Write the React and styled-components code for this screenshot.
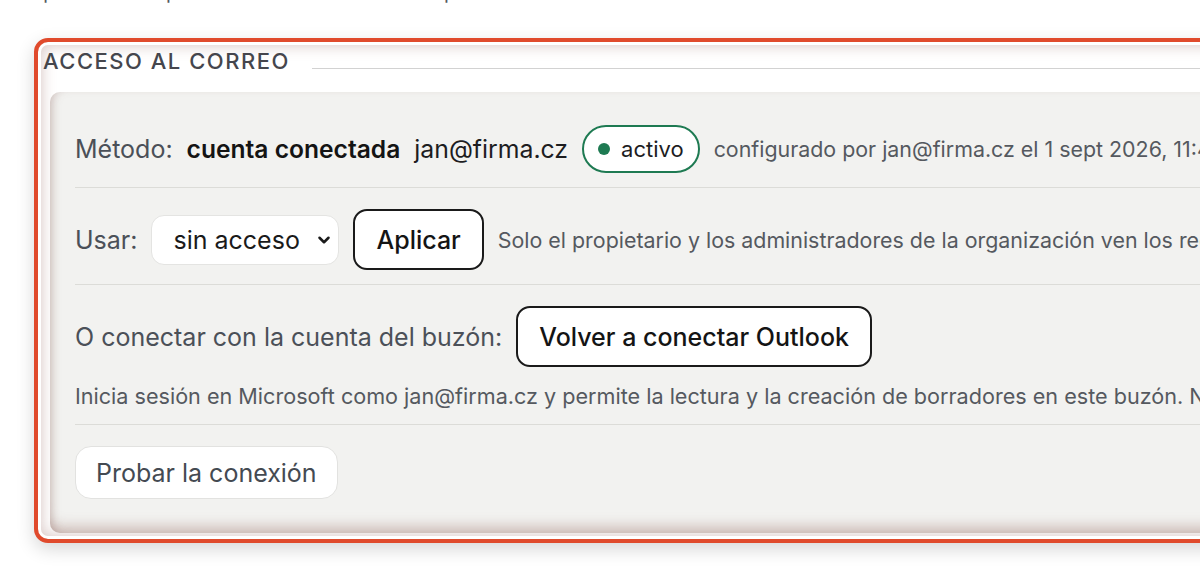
import React from 'react';
import styled, { createGlobalStyle } from 'styled-components';
import { ChevronDown } from 'lucide-react';

const GlobalStyle = createGlobalStyle`
  html, body {
    margin: 0;
    padding: 0;
    background: #ffffff;
    overflow: hidden;
  }
  body {
    font-family: Inter, "Noto Sans", "Liberation Sans", sans-serif;
    color: #1c1c1e;
  }
`;

const Page = styled.div`
  width: 1200px;
  height: 581px;
  overflow: hidden;
`;

const TopNote = styled.p`
  margin: -20px 0 0 22px;
  font-size: 20px;
  line-height: 24px;
  color: #55595f;
  white-space: nowrap;
`;

const Highlight = styled.section`
  box-sizing: border-box;
  width: 1240px;
  margin: 34px 0 0 34px;
  padding: 5px 0 6px 5px;
  border: 4px solid #e04a2c;
  border-radius: 14px;
  background: #ffffff;
  box-shadow:
    0 6px 18px rgba(0, 0, 0, 0.16),
    inset 0 0 0 3px #ffffff,
    inset 0 0 14px 4px rgba(150, 100, 95, 0.35);
`;

const Header = styled.div`
  display: flex;
  align-items: flex-end;
  gap: 22px;
`;

const Legend = styled.h2`
  margin: 0;
  font-size: 22px;
  line-height: 28px;
  font-weight: 500;
  letter-spacing: 1.5px;
  color: #45464d;
  text-transform: uppercase;
`;

const Rule = styled.div`
  flex: 1;
  height: 1px;
  margin-bottom: 6px;
  background: #d2d2d2;
`;

const Panel = styled.div`
  margin: 17px 0 0 7px;
  padding: 33px 24px 34px 25px;
  background: #f2f2f0;
  border-radius: 10px 0 0 10px;
  box-shadow:
    inset 7px 0 10px -5px rgba(140, 100, 95, 0.35),
    inset 0 -14px 14px -8px rgba(150, 105, 95, 0.4);
`;

const Row = styled.div`
  padding: ${p => (p.$first ? '0' : '21px')} 0 ${p => (p.$last ? '0' : '14px')};
  border-bottom: ${p => (p.$last ? 'none' : '1px solid #dcdcd8')};
`;

const Line = styled.div`
  display: flex;
  align-items: center;
  gap: 14px;
  white-space: nowrap;
`;

const Label = styled.span`
  font-size: 25px;
  color: #4b5058;
`;

const Strong = styled.span`
  font-size: 24.6px;
  font-weight: 600;
  color: #141414;
`;

const Value = styled.span`
  font-size: 24.8px;
  color: #1d1d1f;
`;

const Badge = styled.span`
  box-sizing: border-box;
  display: inline-flex;
  align-items: center;
  gap: 11px;
  height: 48px;
  padding: 0 14px;
  border: 2px solid #1e7a52;
  border-radius: 999px;
  background: #ffffff;
  font-size: 22px;
  color: #1d1d1f;
`;

const Dot = styled.span`
  width: 12px;
  height: 12px;
  border-radius: 50%;
  background: #1e7a52;
`;

const Muted = styled.span`
  font-size: 21.4px;
  color: #55595f;
`;

const SelectWrap = styled.div`
  position: relative;
  display: inline-flex;
`;

const Select = styled.select`
  appearance: none;
  box-sizing: border-box;
  width: 188px;
  height: 50px;
  padding: 0 24px 0 21px;
  border: 1px solid #e4e4e2;
  border-radius: 13px;
  background: #ffffff;
  font-family: inherit;
  font-size: 25px;
  color: #1a1a1a;
`;

const Caret = styled(ChevronDown)`
  position: absolute;
  right: 6px;
  top: 16px;
  pointer-events: none;
  color: #1a1a1a;
`;

const Button = styled.button`
  box-sizing: border-box;
  height: ${p => (p.$ghost ? '53px' : '61px')};
  padding: 0 ${p => (p.$ghost ? '20px' : '21px')};
  border: ${p => (p.$ghost ? '1px solid #e2e2e0' : '2px solid #1a1a1a')};
  border-radius: ${p => (p.$ghost ? '16px' : '14px')};
  background: #ffffff;
  font-family: inherit;
  font-size: 25px;
  font-weight: ${p => (p.$ghost ? 400 : 500)};
  color: ${p => (p.$ghost ? '#444a52' : '#141414')};
  cursor: pointer;
`;

const Help = styled.p`
  margin: 15px 0 0;
  font-size: 21.6px;
  line-height: 28px;
  color: #55595f;
  white-space: nowrap;
`;

export default function App() {
  return (
    <Page>
      <GlobalStyle />
      <TopNote>Aquí indica el tipo de acceso al buzón de empresa.</TopNote>
      <Highlight>
        <Header>
          <Legend>Acceso al correo</Legend>
          <Rule />
        </Header>
        <Panel>
          <Row $first>
            <Line>
              <Label>Método:</Label>
              <Strong>cuenta conectada</Strong>
              <Value>jan@firma.cz</Value>
              <Badge>
                <Dot />
                activo
              </Badge>
              <Muted>configurado por jan@firma.cz el 1 sept 2026, 11:42</Muted>
            </Line>
          </Row>
          <Row>
            <Line>
              <Label>Usar:</Label>
              <SelectWrap>
                <Select defaultValue="none">
                  <option value="none">sin acceso</option>
                  <option value="read">lectura</option>
                </Select>
                <Caret size={18} strokeWidth={3.4} />
              </SelectWrap>
              <Button>Aplicar</Button>
              <Muted>
                Solo el propietario y los administradores de la organización ven los registros.
              </Muted>
            </Line>
          </Row>
          <Row>
            <Line>
              <Label>O conectar con la cuenta del buzón:</Label>
              <Button>Volver a conectar Outlook</Button>
            </Line>
            <Help>
              Inicia sesión en Microsoft como jan@firma.cz y permite la lectura y la creación de borradores en este buzón. No se envía nada.
            </Help>
          </Row>
          <Row $last>
            <Button $ghost>Probar la conexión</Button>
          </Row>
        </Panel>
      </Highlight>
    </Page>
  );
}
